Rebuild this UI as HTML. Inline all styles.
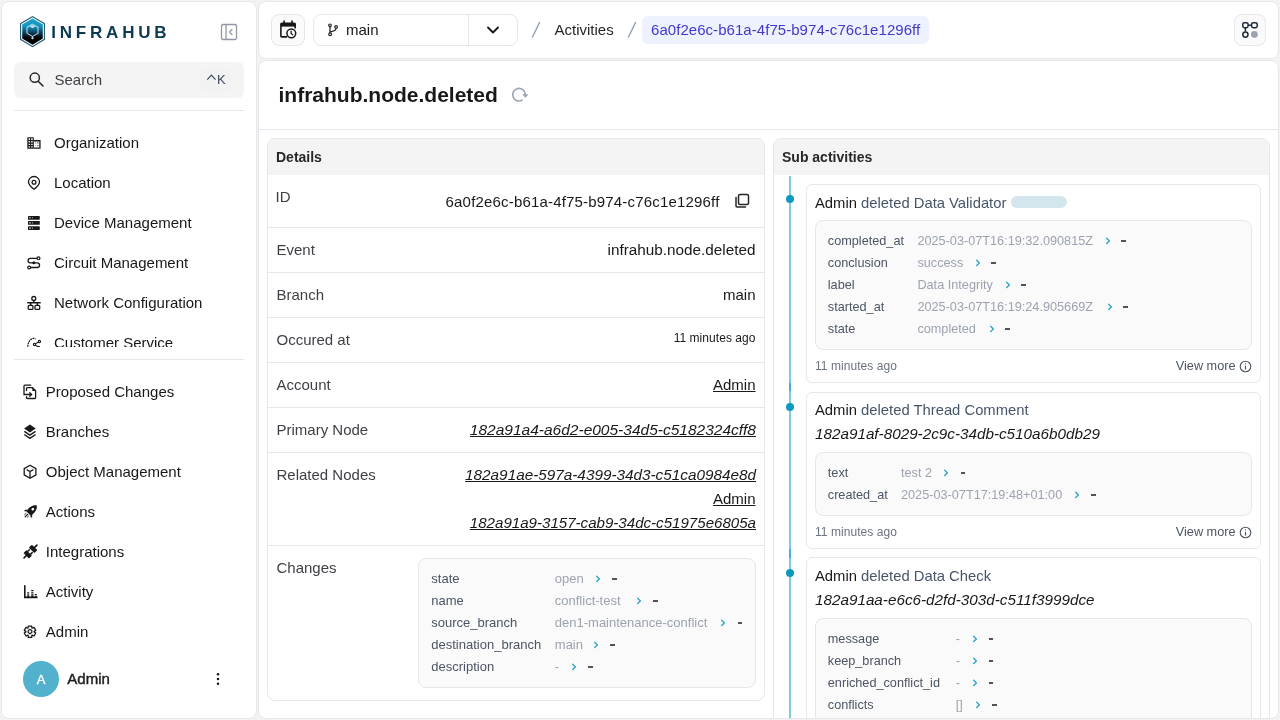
<!DOCTYPE html>
<html><head><meta charset="utf-8"><title>infrahub.node.deleted</title>
<style>
html,body{margin:0;padding:0}
body{width:1280px;height:720px;position:relative;overflow:hidden;background:#f3f3f4;font-family:"Liberation Sans",sans-serif}
.t{position:absolute;white-space:nowrap;line-height:1}
svg{overflow:visible}
</style></head><body><div id="root" style="position:absolute;left:0;top:0;width:1280px;height:720px;will-change:transform">
<div style='position:absolute;left:1px;top:1px;width:256px;height:718px;box-sizing:border-box;background:#fff;border:1px solid #e5e7eb;border-radius:8px'></div>
<div style='position:absolute;left:258px;top:1px;width:1021px;height:58px;box-sizing:border-box;background:#fff;border:1px solid #e5e7eb;border-radius:8px'></div>
<div style='position:absolute;left:258px;top:60px;width:1021px;height:659px;box-sizing:border-box;background:#fff;border:1px solid #e5e7eb;border-radius:8px'></div>
<svg style='position:absolute;left:19px;top:15px;' width='27' height='33' viewBox='0 0 27 33' fill='none'>
<defs><linearGradient id='lg' x1='0' y1='0' x2='0' y2='1'>
<stop offset='0' stop-color='#1aa2cb'/><stop offset='0.3' stop-color='#1595c0'/><stop offset='0.5' stop-color='#0d4d6b'/><stop offset='0.66' stop-color='#07192a'/><stop offset='0.74' stop-color='#000'/><stop offset='1' stop-color='#000'/></linearGradient></defs>
<polygon points='13.5,1 26,8.3 26,24.7 13.5,32.2 1,24.7 1,8.3' fill='#245d78'/>
<polygon points='13.5,2.2 24.9,8.9 24.9,24.1 13.5,31 2.1,24.1 2.1,8.9' fill='#f4fafc'/>
<polygon points='13.5,3.4 23.8,9.5 23.8,23.5 13.5,29.8 3.2,23.5 3.2,9.5' fill='url(#lg)'/>
<path d='M13.5 9.2 L19 12.2 V18.4 L13.5 21.4 L8 18.4 V12.2 Z' stroke='#dfeff5' stroke-width='1' fill='none' opacity='.9'/>
<path d='M10.5 11.6 L13.5 13.2 L16.5 11.6 L13.5 10 Z' fill='#e8f4f8' opacity='.8'/>
<path d='M13.5 21.4 V23.8 M11.9 22.6 L13.5 23.8 L15.1 22.6' stroke='#e6f3f8' stroke-width='0.9'/>
</svg>
<div class='t ' style='left:51.2px;top:24px;font-size:17px;font-weight:700;color:#0b3a52;font-style:normal;letter-spacing:3.8px'>INFRAHUB</div>
<svg style='position:absolute;left:220px;top:23px;' width='18' height='18' viewBox='0 0 18 18' fill='none'><rect x='1.5' y='1.5' width='15' height='15' rx='1.5' stroke='#8f97a6' stroke-width='1.3'/><line x1='6' y1='1.5' x2='6' y2='16.5' stroke='#8f97a6' stroke-width='1.3'/><path d='M12 6.5 L9.5 9 L12 11.5' stroke='#8f97a6' stroke-width='1.3' stroke-linecap='round' stroke-linejoin='round'/></svg>
<div style='position:absolute;left:14px;top:62px;width:230px;height:36px;box-sizing:border-box;background:#f4f4f5;border-radius:6px'></div>
<svg style='position:absolute;left:28px;top:71px;' width='17' height='17' viewBox='0 0 17 17' fill='none'><circle cx='6.8' cy='6.7' r='4.6' stroke='#27272a' stroke-width='1.5'/><line x1='10.2' y1='10.2' x2='15' y2='15' stroke='#27272a' stroke-width='1.6' stroke-linecap='round'/></svg>
<div class='t ' style='left:54.5px;top:72px;font-size:15px;font-weight:400;color:#3f3f46;font-style:normal;'>Search</div>
<div style='position:absolute;left:200px;top:70px;width:31px;height:20px;box-sizing:border-box;background:#f1f2f4;border-radius:4px'></div>
<svg style='position:absolute;left:206px;top:74px;' width='11' height='7' viewBox='0 0 11 7' fill='none'><path d='M1.3 5.6 L5.4 1.2 L9.5 5.6' stroke='#3f4a5a' stroke-width='1.2'/></svg>
<div class='t ' style='left:217px;top:73px;font-size:13px;font-weight:400;color:#3f4a5a;font-style:normal;'>K</div>
<div style='position:absolute;left:14px;top:110px;width:230px;height:1px;box-sizing:border-box;background:#e5e7eb'></div>
<div style='position:absolute;left:2px;top:118px;width:254px;height:229px;overflow:hidden;'><div style='position:absolute;left:-2px;top:-118px;width:1280px;height:720px'>
<svg style='position:absolute;left:27px;top:136px;' width='14' height='14' viewBox='0 0 14 14' fill='none'><rect x='0.3' y='1.3' width='6.5' height='11.5' rx='0.5' fill='#18181b'/><path d='M1.6 2.3h1.5v1.6h-1.5zM4.1 2.3h1.6v1.6h-1.6zM1.6 5h1.5v1.4h-1.5zM4.1 5h1.6v1.4h-1.6zM1.6 7.7h1.5v1.4h-1.5zM4.1 7.7h1.6v1.4h-1.6zM1.6 10.2h1.5v1.4h-1.5zM4.1 10.2h1.6v1.4h-1.6z' fill='#fff' opacity='.9'/><path d='M6.8 4.75 H12.95 V12.15 H6.8' stroke='#18181b' stroke-width='1.3' fill='none'/><circle cx='10.9' cy='6.9' r='.65' fill='#18181b'/><circle cx='10.9' cy='9.6' r='.65' fill='#18181b'/><circle cx='8.4' cy='6.9' r='.6' fill='#18181b' opacity='.6'/><circle cx='8.4' cy='9.6' r='.6' fill='#18181b' opacity='.4'/></svg>
<div class='t ' style='left:54px;top:135px;font-size:15px;font-weight:400;color:#18181b;font-style:normal;'>Organization</div>
<svg style='position:absolute;left:27px;top:176px;' width='14' height='14' viewBox='0 0 14 14' fill='none'><path d='M7 13.3 C3.6 10.6 1.5 8.3 1.5 6 A5.5 5.5 0 0 1 12.5 6 C12.5 8.3 10.4 10.6 7 13.3 Z' stroke='#18181b' stroke-width='1.3'/><circle cx='7' cy='6.3' r='1.9' stroke='#18181b' stroke-width='1.3'/></svg>
<div class='t ' style='left:54px;top:175px;font-size:15px;font-weight:400;color:#18181b;font-style:normal;'>Location</div>
<svg style='position:absolute;left:27px;top:216px;' width='14' height='14' viewBox='0 0 14 14' fill='none'><rect x='1' y='0' width='11.8' height='3.7' rx='0.7' fill='#18181b'/><rect x='1' y='5' width='11.8' height='3.8' rx='0.3' fill='#18181b'/><rect x='1' y='10.2' width='11.8' height='3.9' rx='0.7' fill='#18181b'/><path d='M2.2 1.8h1.6M5 1.8h.7M2.2 6.9h1.6M5 6.9h.7M2.2 12.1h1.6M5 12.1h.7' stroke='#fff' stroke-width='1.1' opacity='.85'/></svg>
<div class='t ' style='left:54px;top:215px;font-size:15px;font-weight:400;color:#18181b;font-style:normal;'>Device Management</div>
<svg style='position:absolute;left:27px;top:256px;' width='14' height='14' viewBox='0 0 14 14' fill='none'><path d='M10 2.3 H3.3 A2.25 2.25 0 0 0 3.3 6.8 H10.2 A2.35 2.35 0 0 1 10.2 11.5 H3.7' stroke='#18181b' stroke-width='1.3'/><circle cx='11.5' cy='2.3' r='1.45' stroke='#18181b' stroke-width='1.2' fill='#fff'/><circle cx='2.2' cy='11.5' r='1.45' stroke='#18181b' stroke-width='1.2' fill='#fff'/><circle cx='6.8' cy='6.8' r='1.5' fill='#18181b'/></svg>
<div class='t ' style='left:54px;top:255px;font-size:15px;font-weight:400;color:#18181b;font-style:normal;'>Circuit Management</div>
<svg style='position:absolute;left:27px;top:296px;' width='14' height='14' viewBox='0 0 14 14' fill='none'><circle cx='6.8' cy='2.5' r='2' stroke='#18181b' stroke-width='1.3'/><path d='M6.8 4.5 V6.8 M0.3 6.8 H13.7 M3.7 6.8 V9.3 M10.4 6.8 V9.3' stroke='#18181b' stroke-width='1.4'/><rect x='1.25' y='9.3' width='4.7' height='4.1' rx='1' stroke='#18181b' stroke-width='1.3'/><rect x='8' y='9.3' width='4.7' height='4.1' rx='1' stroke='#18181b' stroke-width='1.3'/></svg>
<div class='t ' style='left:54px;top:295px;font-size:15px;font-weight:400;color:#18181b;font-style:normal;'>Network Configuration</div>
<svg style='position:absolute;left:27px;top:336px;' width='14' height='14' viewBox='0 0 14 14' fill='none'><path d='M0.8 10.8 C0.8 7 2.6 3 6.3 2.4 C7.3 2.3 8 2.5 8.6 3.2' stroke='#18181b' stroke-width='1.2' stroke-dasharray='1.8 0.7'/><circle cx='7.5' cy='8.5' r='1.15' stroke='#18181b' stroke-width='1.1'/><circle cx='12.4' cy='5.5' r='1.15' stroke='#18181b' stroke-width='1.1'/><path d='M8.5 7.8 L11.4 6.1 M8.5 9.2 L10.6 10.5 H12.9' stroke='#18181b' stroke-width='1.1'/></svg>
<div class='t ' style='left:54px;top:335px;font-size:15px;font-weight:400;color:#18181b;font-style:normal;'>Customer Service</div>
</div></div>
<div style='position:absolute;left:14px;top:359px;width:230px;height:1px;box-sizing:border-box;background:#e5e7eb'></div>
<svg style='position:absolute;left:23px;top:384px;' width='15' height='15' viewBox='0 0 15 15' fill='none'><path d='M7.7 1.2 H1.9 C1.4 1.2 1 1.6 1 2.1 V10.5 H8.6' stroke='#18181b' stroke-width='1.3' stroke-linecap='round'/><path d='M6.7 8.7 L8.6 10.5 L6.7 12.3' stroke='#18181b' stroke-width='1.3' stroke-linecap='round' stroke-linejoin='round'/><path d='M3.5 6.6 V4.6 C3.5 4.1 3.9 3.7 4.4 3.7 H9.5 L12.6 6.8 V13.6 C12.6 14.1 12.2 14.5 11.7 14.5 H4.4 C3.9 14.5 3.5 14.1 3.5 13.6 V12.6' stroke='#18181b' stroke-width='1.3' stroke-linecap='round'/><path d='M9.3 3.7 V7 H12.6 Z' fill='#18181b'/></svg>
<div class='t ' style='left:45.8px;top:384px;font-size:15px;font-weight:400;color:#18181b;font-style:normal;'>Proposed Changes</div>
<svg style='position:absolute;left:23px;top:424px;' width='15' height='15' viewBox='0 0 15 15' fill='none'><path d='M6.9 0.4 L12.7 4.4 L6.9 8.4 L1.1 4.4 Z' fill='#18181b'/><path d='M1.3 7.4 L6.9 11.2 L12.5 7.4 M1.3 10.5 L6.9 14.3 L12.5 10.5' stroke='#18181b' stroke-width='1.4' stroke-linejoin='round' fill='none'/></svg>
<div class='t ' style='left:45.8px;top:424px;font-size:15px;font-weight:400;color:#18181b;font-style:normal;'>Branches</div>
<svg style='position:absolute;left:23px;top:464px;' width='15' height='15' viewBox='0 0 15 15' fill='none'><path d='M7 1.3 L12.9 4.6 V10.9 L7 14.3 L1.2 10.9 V4.6 Z' stroke='#18181b' stroke-width='1.3' stroke-linejoin='round'/><path d='M3.6 5.5 C5 6.6 5.8 7.3 7 7.4 C8.2 7.3 9 6.6 10.4 5.5 M7 7.5 V14' stroke='#18181b' stroke-width='1.3'/></svg>
<div class='t ' style='left:45.8px;top:464px;font-size:15px;font-weight:400;color:#18181b;font-style:normal;'>Object Management</div>
<svg style='position:absolute;left:23px;top:504px;' width='15' height='15' viewBox='0 0 15 15' fill='none'><g transform='rotate(45 7.5 7.5)'><path d='M7.5 -1.3 C10.4 0.8 11.2 3.8 11 6.8 L10.6 10.3 H4.4 L4 6.8 C3.8 3.8 4.6 0.8 7.5 -1.3 Z' fill='#18181b'/><ellipse cx='7.5' cy='4.2' rx='1.2' ry='1.4' fill='#fff'/><path d='M4.3 8.2 L2.6 10 V11.8 L4.5 10.6 Z M10.7 8.2 L12.4 10 V11.8 L10.5 10.6 Z' fill='#18181b'/><path d='M7.5 11.6 V15' stroke='#18181b' stroke-width='1.2' stroke-linecap='round'/><path d='M5.6 11.8 V14 M9.4 11.8 V14' stroke='#18181b' stroke-width='1.1' opacity='.5' stroke-linecap='round'/></g></svg>
<div class='t ' style='left:45.8px;top:504px;font-size:15px;font-weight:400;color:#18181b;font-style:normal;'>Actions</div>
<svg style='position:absolute;left:23px;top:544px;' width='15' height='15' viewBox='0 0 15 15' fill='none'><g transform='rotate(-45 7.5 7.5)'><path d='M-1.6 7.5 H1.8 M13 7.5 H16.6' stroke='#18181b' stroke-width='1.6' stroke-linecap='round'/><rect x='1.4' y='3.6' width='4.2' height='7.8' rx='0.8' fill='#18181b'/><path d='M5.4 5.5 H7.9 M5.4 9.5 H7.9' stroke='#18181b' stroke-width='1.5' stroke-linecap='round'/><rect x='9.1' y='3.6' width='4.2' height='7.8' rx='0.8' fill='#18181b'/></g></svg>
<div class='t ' style='left:45.8px;top:544px;font-size:15px;font-weight:400;color:#18181b;font-style:normal;'>Integrations</div>
<svg style='position:absolute;left:23px;top:584px;' width='15' height='15' viewBox='0 0 15 15' fill='none'><path d='M1.8 2 V13.4 H13.7' stroke='#18181b' stroke-width='1.6' stroke-linecap='square'/><path d='M4.2 8.9 h2 M4.2 11 h2 M4.2 12.7 h2 M8.2 6.7 h2.3 M8.2 8.9 h2.3 M8.2 11 h2.3 M8.2 12.7 h2.3 M11.7 10.6 h2.1 M11.7 12.7 h2.1' stroke='#18181b' stroke-width='1.3'/></svg>
<div class='t ' style='left:45.8px;top:584px;font-size:15px;font-weight:400;color:#18181b;font-style:normal;'>Activity</div>
<svg style='position:absolute;left:23px;top:624px;' width='15' height='15' viewBox='0 0 15 15' fill='none'><path d='M5.11 4.06 L5.26 2.06 L8.74 2.06 L8.89 4.06 L9.20 4.24 L11.01 3.37 L12.75 6.39 L11.10 7.52 L11.10 7.88 L12.75 9.01 L11.01 12.03 L9.20 11.16 L8.89 11.34 L8.74 13.34 L5.26 13.34 L5.11 11.34 L4.80 11.16 L2.99 12.03 L1.25 9.01 L2.90 7.88 L2.90 7.52 L1.25 6.39 L2.99 3.37 L4.80 4.24 Z' stroke='#18181b' stroke-width='1.25' stroke-linejoin='round' fill='none'/><path d='M7 5.5 L8.8 6.5 V8.6 L7 9.7 L5.2 8.6 V6.5 Z' stroke='#18181b' stroke-width='1.2' stroke-linejoin='round'/></svg>
<div class='t ' style='left:45.8px;top:624px;font-size:15px;font-weight:400;color:#18181b;font-style:normal;'>Admin</div>
<div style='position:absolute;left:23px;top:661px;width:36px;height:36px;box-sizing:border-box;background:#52b1cc;border-radius:50%'></div>
<div class='t ' style='left:34px;top:673px;font-size:13px;font-weight:400;color:#fff;font-style:normal;width:14px;text-align:center;-webkit-text-stroke:0.3px #fff'>A</div>
<div class='t ' style='left:67.3px;top:671px;font-size:15px;font-weight:400;color:#1f1f23;font-style:normal;-webkit-text-stroke:0.45px #1f1f23'>Admin</div>
<svg style='position:absolute;left:215px;top:672px;' width='6' height='14' viewBox='0 0 6 14' fill='none'><circle cx='3' cy='2.3' r='1.25' fill='#18181b'/><circle cx='3' cy='7' r='1.25' fill='#18181b'/><circle cx='3' cy='11.7' r='1.25' fill='#18181b'/></svg>
<div style='position:absolute;left:271px;top:14px;width:34px;height:32px;box-sizing:border-box;background:#fafafa;border:1px solid #e5e7eb;border-radius:8px'></div>
<svg style='position:absolute;left:279px;top:20px;' width='19' height='19' viewBox='0 0 19 19' fill='none'><path d='M8 16.9 H2.9 C2.3 16.9 1.9 16.5 1.9 15.9 V4.2 C1.9 3.6 2.3 3.2 2.9 3.2 H15.2 C15.8 3.2 16.2 3.6 16.2 4.2 V8.6' stroke='#18181b' stroke-width='1.6'/><rect x='1.9' y='3.1' width='14.3' height='3.5' fill='#18181b'/><path d='M5.1 1 V4 M13 1 V4' stroke='#18181b' stroke-width='1.6' stroke-linecap='round'/><circle cx='12.3' cy='13.3' r='4.4' fill='#fff' stroke='#18181b' stroke-width='1.5'/><path d='M12.1 11.2 V13.5 L13.7 14.7' stroke='#18181b' stroke-width='1.3' stroke-linecap='round'/></svg>
<div style='position:absolute;left:313px;top:14px;width:205px;height:32px;box-sizing:border-box;background:#fff;border:1px solid #e5e7eb;border-radius:8px'></div>
<div style='position:absolute;left:468px;top:15px;width:1px;height:30px;box-sizing:border-box;background:#e5e7eb'></div>
<svg style='position:absolute;left:326px;top:23px;' width='13' height='14' viewBox='0 0 13 14' fill='none'><circle cx='4' cy='2.3' r='1.3' stroke='#27272a' stroke-width='1.2'/><circle cx='4.1' cy='11.3' r='1.4' stroke='#27272a' stroke-width='1.2'/><circle cx='10.1' cy='3.9' r='1.3' stroke='#27272a' stroke-width='1.2'/><path d='M4 3.6 V9.9 M10.1 5.2 C10.1 7.2 9 8 4.3 8.8' stroke='#27272a' stroke-width='1.3'/></svg>
<div class='t ' style='left:346px;top:22px;font-size:15px;font-weight:400;color:#18181b;font-style:normal;'>main</div>
<svg style='position:absolute;left:486px;top:25px;' width='14' height='10' viewBox='0 0 14 10' fill='none'><path d='M2 2.5 L7 7.5 L12 2.5' stroke='#18181b' stroke-width='1.9' stroke-linecap='round' stroke-linejoin='round'/></svg>
<svg style='position:absolute;left:530px;top:20px;' width='12' height='20' viewBox='0 0 12 20' fill='none'><line x1='9.5' y1='2.5' x2='2.5' y2='17' stroke='#94a3b8' stroke-width='1.5' stroke-linecap='round'/></svg>
<div class='t ' style='left:554.5px;top:22px;font-size:15px;font-weight:400;color:#27272a;font-style:normal;'>Activities</div>
<svg style='position:absolute;left:626px;top:20px;' width='12' height='20' viewBox='0 0 12 20' fill='none'><line x1='9.5' y1='2.5' x2='2.5' y2='17' stroke='#94a3b8' stroke-width='1.5' stroke-linecap='round'/></svg>
<div style='position:absolute;left:642px;top:16px;width:287px;height:28px;box-sizing:border-box;background:#eef2ff;border-radius:6px'></div>
<div class='t ' style='left:651px;top:22px;font-size:15px;font-weight:400;color:#4338ca;font-style:normal;letter-spacing:0.05px'>6a0f2e6c-b61a-4f75-b974-c76c1e1296ff</div>
<div style='position:absolute;left:1234px;top:14px;width:32px;height:32px;box-sizing:border-box;background:#fafafa;border:1px solid #e5e7eb;border-radius:8px'></div>
<svg style='position:absolute;left:1241px;top:21px;' width='18' height='18' viewBox='0 0 18 18' fill='none'><rect x='1.75' y='1.75' width='5.3' height='4.9' rx='1.6' stroke='#1e293b' stroke-width='1.5'/><rect x='10.6' y='1.75' width='5.6' height='4.9' rx='1.6' stroke='#1e293b' stroke-width='1.5'/><path d='M7 4.2 H10.6 M4.4 6.6 V10.6' stroke='#1e293b' stroke-width='1.5'/><circle cx='4.4' cy='13.6' r='2.6' stroke='#1e293b' stroke-width='1.5'/><circle cx='13.4' cy='13.4' r='3.4' fill='#9ca3af'/></svg>
<div class='t ' style='left:278.5px;top:84px;font-size:21px;font-weight:700;color:#18181b;font-style:normal;'>infrahub.node.deleted</div>
<svg style='position:absolute;left:509px;top:86px;' width='20' height='18' viewBox='0 0 20 18' fill='none'><path d='M13.15 14.16 A6.3 6.3 0 1 1 16.3 8.4' stroke='#9aa3b2' stroke-width='1.6' stroke-linecap='round'/><path d='M13.8 8.6 L18.9 8.6 L16.35 11.5 Z' fill='#9aa3b2' stroke='#9aa3b2' stroke-width='0.6' stroke-linejoin='round'/></svg>
<div style='position:absolute;left:259px;top:129px;width:1019px;height:1px;box-sizing:border-box;background:#e5e7eb'></div>
<div style='position:absolute;left:267px;top:138px;width:498px;height:600px;box-sizing:border-box;background:#fff;border:1px solid #e5e7eb;border-radius:8px;height:563px'></div>
<div style='position:absolute;left:268px;top:139px;width:496px;height:36px;box-sizing:border-box;background:#f4f4f5;border-radius:7px 7px 0 0'></div>
<div class='t ' style='left:276px;top:150px;font-size:14px;font-weight:700;color:#27272a;font-style:normal;'>Details</div>
<div style='position:absolute;left:268px;top:227px;width:496px;height:1px;box-sizing:border-box;background:#e5e7eb'></div>
<div style='position:absolute;left:268px;top:272px;width:496px;height:1px;box-sizing:border-box;background:#e5e7eb'></div>
<div style='position:absolute;left:268px;top:317px;width:496px;height:1px;box-sizing:border-box;background:#e5e7eb'></div>
<div style='position:absolute;left:268px;top:362px;width:496px;height:1px;box-sizing:border-box;background:#e5e7eb'></div>
<div style='position:absolute;left:268px;top:407px;width:496px;height:1px;box-sizing:border-box;background:#e5e7eb'></div>
<div style='position:absolute;left:268px;top:452px;width:496px;height:1px;box-sizing:border-box;background:#e5e7eb'></div>
<div style='position:absolute;left:268px;top:545px;width:496px;height:1px;box-sizing:border-box;background:#e5e7eb'></div>
<div class='t ' style='left:275.5px;top:189px;font-size:15px;font-weight:400;color:#3f3f46;font-style:normal;'>ID</div>
<div class='t ' style='right:560.5px;top:193.5px;font-size:15px;font-weight:400;color:#18181b;font-style:normal;letter-spacing:0.18px'>6a0f2e6c-b61a-4f75-b974-c76c1e1296ff</div>
<svg style='position:absolute;left:734px;top:193px;' width='16' height='16' viewBox='0 0 16 16' fill='none'><rect x='4.5' y='1.5' width='10' height='10' rx='1.5' stroke='#27272a' stroke-width='1.5'/><path d='M2 4.5 V13 C2 13.6 2.4 14 3 14 H11.5' stroke='#27272a' stroke-width='1.5' stroke-linecap='round'/></svg>
<div class='t ' style='left:276.5px;top:242px;font-size:15px;font-weight:400;color:#3f3f46;font-style:normal;'>Event</div>
<div class='t ' style='right:524.5px;top:242px;font-size:15.3px;font-weight:400;color:#18181b;font-style:normal;'>infrahub.node.deleted</div>
<div class='t ' style='left:276.5px;top:287px;font-size:15px;font-weight:400;color:#3f3f46;font-style:normal;'>Branch</div>
<div class='t ' style='right:524.5px;top:287px;font-size:15px;font-weight:400;color:#18181b;font-style:normal;'>main</div>
<div class='t ' style='left:276.5px;top:332px;font-size:15px;font-weight:400;color:#3f3f46;font-style:normal;'>Occured at</div>
<div class='t ' style='right:524.5px;top:332px;font-size:12px;font-weight:400;color:#18181b;font-style:normal;letter-spacing:0.05px'>11 minutes ago</div>
<div class='t ' style='left:276.5px;top:377px;font-size:15px;font-weight:400;color:#3f3f46;font-style:normal;'>Account</div>
<div class='t ' style='right:524.5px;top:377px;font-size:15px;font-weight:400;color:#18181b;font-style:normal;text-decoration:underline'>Admin</div>
<div class='t ' style='left:276.5px;top:422px;font-size:15px;font-weight:400;color:#3f3f46;font-style:normal;'>Primary Node</div>
<div class='t ' style='right:524px;top:422px;font-size:15.5px;font-weight:400;color:#18181b;font-style:italic;text-decoration:underline'>182a91a4-a6d2-e005-34d5-c5182324cff8</div>
<div class='t ' style='left:276.5px;top:467px;font-size:15px;font-weight:400;color:#3f3f46;font-style:normal;'>Related Nodes</div>
<div class='t ' style='right:524px;top:467px;font-size:15.3px;font-weight:400;color:#18181b;font-style:italic;text-decoration:underline'>182a91ae-597a-4399-34d3-c51ca0984e8d</div>
<div class='t ' style='right:524.5px;top:491px;font-size:15px;font-weight:400;color:#18181b;font-style:normal;text-decoration:underline'>Admin</div>
<div class='t ' style='right:524px;top:515px;font-size:15.1px;font-weight:400;color:#18181b;font-style:italic;text-decoration:underline'>182a91a9-3157-cab9-34dc-c51975e6805a</div>
<div class='t ' style='left:276.5px;top:560px;font-size:15px;font-weight:400;color:#3f3f46;font-style:normal;'>Changes</div>
<div style='position:absolute;left:418px;top:558px;width:338px;height:130px;box-sizing:border-box;background:#fafafa;border:1px solid #e5e7eb;border-radius:8px'></div>
<div class='t ' style='left:431.3px;top:572px;font-size:13px;font-weight:400;color:#4b5563;font-style:normal;'>state</div>
<div class='t ' style='left:554.8px;top:572px;font-size:13px;font-weight:400;color:#9ca3af;font-style:normal;'>open</div>
<svg style='position:absolute;left:595px;top:573px;' width='8' height='10' viewBox='0 0 8 10' fill='none'><path d='M1.7 3.3 L4.4 5.9 L1.7 8.5' stroke='#2ea5c6' stroke-width='1.35' stroke-linecap='round' stroke-linejoin='round'/></svg>
<div style='position:absolute;left:612.1px;top:578.4px;width:4.6px;height:1.4px;box-sizing:border-box;background:#52525b'></div>
<div class='t ' style='left:431.3px;top:594px;font-size:13px;font-weight:400;color:#4b5563;font-style:normal;'>name</div>
<div class='t ' style='left:554.8px;top:594px;font-size:13px;font-weight:400;color:#9ca3af;font-style:normal;'>conflict-test</div>
<svg style='position:absolute;left:635.5px;top:595px;' width='8' height='10' viewBox='0 0 8 10' fill='none'><path d='M1.7 3.3 L4.4 5.9 L1.7 8.5' stroke='#2ea5c6' stroke-width='1.35' stroke-linecap='round' stroke-linejoin='round'/></svg>
<div style='position:absolute;left:653.1px;top:600.4px;width:4.6px;height:1.4px;box-sizing:border-box;background:#52525b'></div>
<div class='t ' style='left:431.3px;top:616px;font-size:13px;font-weight:400;color:#4b5563;font-style:normal;'>source_branch</div>
<div class='t ' style='left:554.8px;top:616px;font-size:13px;font-weight:400;color:#9ca3af;font-style:normal;'>den1-maintenance-conflict</div>
<svg style='position:absolute;left:720px;top:617px;' width='8' height='10' viewBox='0 0 8 10' fill='none'><path d='M1.7 3.3 L4.4 5.9 L1.7 8.5' stroke='#2ea5c6' stroke-width='1.35' stroke-linecap='round' stroke-linejoin='round'/></svg>
<div style='position:absolute;left:737.5px;top:622.4px;width:4.6px;height:1.4px;box-sizing:border-box;background:#52525b'></div>
<div class='t ' style='left:431.3px;top:638px;font-size:13px;font-weight:400;color:#4b5563;font-style:normal;'>destination_branch</div>
<div class='t ' style='left:554.8px;top:638px;font-size:13px;font-weight:400;color:#9ca3af;font-style:normal;'>main</div>
<svg style='position:absolute;left:592.5px;top:639px;' width='8' height='10' viewBox='0 0 8 10' fill='none'><path d='M1.7 3.3 L4.4 5.9 L1.7 8.5' stroke='#2ea5c6' stroke-width='1.35' stroke-linecap='round' stroke-linejoin='round'/></svg>
<div style='position:absolute;left:610.1px;top:644.4px;width:4.6px;height:1.4px;box-sizing:border-box;background:#52525b'></div>
<div class='t ' style='left:431.3px;top:660px;font-size:13px;font-weight:400;color:#4b5563;font-style:normal;'>description</div>
<div class='t ' style='left:554.8px;top:660px;font-size:13px;font-weight:400;color:#9ca3af;font-style:normal;'>-</div>
<svg style='position:absolute;left:571px;top:661px;' width='8' height='10' viewBox='0 0 8 10' fill='none'><path d='M1.7 3.3 L4.4 5.9 L1.7 8.5' stroke='#2ea5c6' stroke-width='1.35' stroke-linecap='round' stroke-linejoin='round'/></svg>
<div style='position:absolute;left:588.2px;top:666.4px;width:4.6px;height:1.4px;box-sizing:border-box;background:#52525b'></div>
<div style='position:absolute;left:259px;top:61px;width:1019px;height:657px;overflow:hidden;border-radius:0 0 7px 7px'><div style='position:absolute;left:-259px;top:-61px;width:1280px;height:720px'>
<div style='position:absolute;left:773px;top:138px;width:497px;height:700px;box-sizing:border-box;background:#fff;border:1px solid #e5e7eb;border-radius:8px'></div>
<div style='position:absolute;left:774px;top:139px;width:495px;height:36px;box-sizing:border-box;background:#f4f4f5;border-radius:7px 7px 0 0'></div>
<div class='t ' style='left:782px;top:150px;font-size:14px;font-weight:700;color:#27272a;font-style:normal;'>Sub activities</div>
<div style='position:absolute;left:789px;top:176px;width:2px;height:215px;box-sizing:border-box;background:rgba(14,155,192,.52)'></div>
<div style='position:absolute;left:789px;top:383px;width:2px;height:175px;box-sizing:border-box;background:rgba(14,155,192,.52)'></div>
<div style='position:absolute;left:789px;top:549px;width:2px;height:200px;box-sizing:border-box;background:rgba(14,155,192,.52)'></div>
<div style='position:absolute;left:785.8px;top:194.8px;width:8.4px;height:8.4px;box-sizing:border-box;background:#0e99c0;border-radius:50%'></div>
<div style='position:absolute;left:785.8px;top:402.8px;width:8.4px;height:8.4px;box-sizing:border-box;background:#0e99c0;border-radius:50%'></div>
<div style='position:absolute;left:785.8px;top:568.8px;width:8.4px;height:8.4px;box-sizing:border-box;background:#0e99c0;border-radius:50%'></div>
<div style='position:absolute;left:806px;top:184px;width:455px;height:199px;box-sizing:border-box;background:#fff;border:1px solid #e5e7eb;border-radius:6px'></div>
<div class='t ' style='left:815px;top:196px;font-size:14.8px;font-weight:400;color:#18181b;font-style:normal;'>Admin <span style="color:#475569">deleted Data Validator</span></div>
<div style='position:absolute;left:1011px;top:196px;width:56px;height:12px;box-sizing:border-box;background:#d4e6ed;border-radius:6px'></div>
<div style='position:absolute;left:815px;top:220px;width:437px;height:130px;box-sizing:border-box;background:#fafafa;border:1px solid #e5e7eb;border-radius:8px'></div>
<div class='t ' style='left:827.8px;top:235px;font-size:12.7px;font-weight:400;color:#4b5563;font-style:normal;'>completed_at</div>
<div class='t ' style='left:917.4px;top:235px;font-size:12.7px;font-weight:400;color:#9ca3af;font-style:normal;'>2025-03-07T16:19:32.090815Z</div>
<svg style='position:absolute;left:1105px;top:235px;' width='8' height='10' viewBox='0 0 8 10' fill='none'><path d='M1.7 3.3 L4.4 5.9 L1.7 8.5' stroke='#2ea5c6' stroke-width='1.35' stroke-linecap='round' stroke-linejoin='round'/></svg>
<div style='position:absolute;left:1121.0px;top:240.4px;width:4.6px;height:1.4px;box-sizing:border-box;background:#52525b'></div>
<div class='t ' style='left:827.8px;top:257px;font-size:12.7px;font-weight:400;color:#4b5563;font-style:normal;'>conclusion</div>
<div class='t ' style='left:917.4px;top:257px;font-size:12.7px;font-weight:400;color:#9ca3af;font-style:normal;'>success</div>
<svg style='position:absolute;left:975px;top:257px;' width='8' height='10' viewBox='0 0 8 10' fill='none'><path d='M1.7 3.3 L4.4 5.9 L1.7 8.5' stroke='#2ea5c6' stroke-width='1.35' stroke-linecap='round' stroke-linejoin='round'/></svg>
<div style='position:absolute;left:991.0px;top:262.4px;width:4.6px;height:1.4px;box-sizing:border-box;background:#52525b'></div>
<div class='t ' style='left:827.8px;top:279px;font-size:12.7px;font-weight:400;color:#4b5563;font-style:normal;'>label</div>
<div class='t ' style='left:917.4px;top:279px;font-size:12.7px;font-weight:400;color:#9ca3af;font-style:normal;'>Data Integrity</div>
<svg style='position:absolute;left:1005px;top:279px;' width='8' height='10' viewBox='0 0 8 10' fill='none'><path d='M1.7 3.3 L4.4 5.9 L1.7 8.5' stroke='#2ea5c6' stroke-width='1.35' stroke-linecap='round' stroke-linejoin='round'/></svg>
<div style='position:absolute;left:1021.0px;top:284.4px;width:4.6px;height:1.4px;box-sizing:border-box;background:#52525b'></div>
<div class='t ' style='left:827.8px;top:301px;font-size:12.7px;font-weight:400;color:#4b5563;font-style:normal;'>started_at</div>
<div class='t ' style='left:917.4px;top:301px;font-size:12.7px;font-weight:400;color:#9ca3af;font-style:normal;'>2025-03-07T16:19:24.905669Z</div>
<svg style='position:absolute;left:1107px;top:301px;' width='8' height='10' viewBox='0 0 8 10' fill='none'><path d='M1.7 3.3 L4.4 5.9 L1.7 8.5' stroke='#2ea5c6' stroke-width='1.35' stroke-linecap='round' stroke-linejoin='round'/></svg>
<div style='position:absolute;left:1123.0px;top:306.4px;width:4.6px;height:1.4px;box-sizing:border-box;background:#52525b'></div>
<div class='t ' style='left:827.8px;top:323px;font-size:12.7px;font-weight:400;color:#4b5563;font-style:normal;'>state</div>
<div class='t ' style='left:917.4px;top:323px;font-size:12.7px;font-weight:400;color:#9ca3af;font-style:normal;'>completed</div>
<svg style='position:absolute;left:989px;top:323px;' width='8' height='10' viewBox='0 0 8 10' fill='none'><path d='M1.7 3.3 L4.4 5.9 L1.7 8.5' stroke='#2ea5c6' stroke-width='1.35' stroke-linecap='round' stroke-linejoin='round'/></svg>
<div style='position:absolute;left:1005.0px;top:328.4px;width:4.6px;height:1.4px;box-sizing:border-box;background:#52525b'></div>
<div class='t ' style='left:815px;top:360px;font-size:12px;font-weight:400;color:#6b7280;font-style:normal;letter-spacing:0.05px'>11 minutes ago</div>
<div class='t ' style='right:44.5px;top:360px;font-size:12.7px;font-weight:400;color:#4b5563;font-style:normal;'>View more</div>
<svg style='position:absolute;left:1239px;top:360px;' width='13' height='13' viewBox='0 0 13 13' fill='none'><circle cx='6.5' cy='6.5' r='5.3' stroke='#4b5563' stroke-width='1.1'/><path d='M6.5 5.8 V9.5' stroke='#4b5563' stroke-width='1.2'/><circle cx='6.5' cy='3.9' r='0.7' fill='#4b5563'/></svg>
<div style='position:absolute;left:806px;top:392px;width:455px;height:157px;box-sizing:border-box;background:#fff;border:1px solid #e5e7eb;border-radius:6px'></div>
<div class='t ' style='left:815px;top:403px;font-size:14.8px;font-weight:400;color:#18181b;font-style:normal;'>Admin <span style="color:#475569">deleted Thread Comment</span></div>
<div class='t ' style='left:815px;top:426px;font-size:15.25px;font-weight:400;color:#18181b;font-style:italic;'>182a91af-8029-2c9c-34db-c510a6b0db29</div>
<div style='position:absolute;left:815px;top:452px;width:437px;height:64px;box-sizing:border-box;background:#fafafa;border:1px solid #e5e7eb;border-radius:8px'></div>
<div class='t ' style='left:827.8px;top:467px;font-size:12.7px;font-weight:400;color:#4b5563;font-style:normal;'>text</div>
<div class='t ' style='left:901px;top:467px;font-size:12.7px;font-weight:400;color:#9ca3af;font-style:normal;'>test 2</div>
<svg style='position:absolute;left:943.4px;top:467px;' width='8' height='10' viewBox='0 0 8 10' fill='none'><path d='M1.7 3.3 L4.4 5.9 L1.7 8.5' stroke='#2ea5c6' stroke-width='1.35' stroke-linecap='round' stroke-linejoin='round'/></svg>
<div style='position:absolute;left:960.5px;top:472.4px;width:4.6px;height:1.4px;box-sizing:border-box;background:#52525b'></div>
<div class='t ' style='left:827.8px;top:489px;font-size:12.7px;font-weight:400;color:#4b5563;font-style:normal;'>created_at</div>
<div class='t ' style='left:901px;top:489px;font-size:12.7px;font-weight:400;color:#9ca3af;font-style:normal;'>2025-03-07T17:19:48+01:00</div>
<svg style='position:absolute;left:1073.5px;top:489px;' width='8' height='10' viewBox='0 0 8 10' fill='none'><path d='M1.7 3.3 L4.4 5.9 L1.7 8.5' stroke='#2ea5c6' stroke-width='1.35' stroke-linecap='round' stroke-linejoin='round'/></svg>
<div style='position:absolute;left:1091.0px;top:494.4px;width:4.6px;height:1.4px;box-sizing:border-box;background:#52525b'></div>
<div class='t ' style='left:815px;top:526px;font-size:12px;font-weight:400;color:#6b7280;font-style:normal;letter-spacing:0.05px'>11 minutes ago</div>
<div class='t ' style='right:44.5px;top:526px;font-size:12.7px;font-weight:400;color:#4b5563;font-style:normal;'>View more</div>
<svg style='position:absolute;left:1239px;top:526px;' width='13' height='13' viewBox='0 0 13 13' fill='none'><circle cx='6.5' cy='6.5' r='5.3' stroke='#4b5563' stroke-width='1.1'/><path d='M6.5 5.8 V9.5' stroke='#4b5563' stroke-width='1.2'/><circle cx='6.5' cy='3.9' r='0.7' fill='#4b5563'/></svg>
<div style='position:absolute;left:806px;top:557px;width:455px;height:300px;box-sizing:border-box;background:#fff;border:1px solid #e5e7eb;border-radius:6px'></div>
<div class='t ' style='left:815px;top:569px;font-size:14.8px;font-weight:400;color:#18181b;font-style:normal;'>Admin <span style="color:#475569">deleted Data Check</span></div>
<div class='t ' style='left:815px;top:592px;font-size:15.25px;font-weight:400;color:#18181b;font-style:italic;'>182a91aa-e6c6-d2fd-303d-c511f3999dce</div>
<div style='position:absolute;left:815px;top:618px;width:437px;height:200px;box-sizing:border-box;background:#fafafa;border:1px solid #e5e7eb;border-radius:8px'></div>
<div class='t ' style='left:827.8px;top:633px;font-size:12.7px;font-weight:400;color:#4b5563;font-style:normal;'>message</div>
<div class='t ' style='left:955.8px;top:633px;font-size:12.7px;font-weight:400;color:#9ca3af;font-style:normal;'>-</div>
<svg style='position:absolute;left:971.7px;top:633px;' width='8' height='10' viewBox='0 0 8 10' fill='none'><path d='M1.7 3.3 L4.4 5.9 L1.7 8.5' stroke='#2ea5c6' stroke-width='1.35' stroke-linecap='round' stroke-linejoin='round'/></svg>
<div style='position:absolute;left:988.9px;top:638.4px;width:4.6px;height:1.4px;box-sizing:border-box;background:#52525b'></div>
<div class='t ' style='left:827.8px;top:655px;font-size:12.7px;font-weight:400;color:#4b5563;font-style:normal;'>keep_branch</div>
<div class='t ' style='left:955.8px;top:655px;font-size:12.7px;font-weight:400;color:#9ca3af;font-style:normal;'>-</div>
<svg style='position:absolute;left:971.7px;top:655px;' width='8' height='10' viewBox='0 0 8 10' fill='none'><path d='M1.7 3.3 L4.4 5.9 L1.7 8.5' stroke='#2ea5c6' stroke-width='1.35' stroke-linecap='round' stroke-linejoin='round'/></svg>
<div style='position:absolute;left:988.9px;top:660.4px;width:4.6px;height:1.4px;box-sizing:border-box;background:#52525b'></div>
<div class='t ' style='left:827.8px;top:677px;font-size:12.7px;font-weight:400;color:#4b5563;font-style:normal;'>enriched_conflict_id</div>
<div class='t ' style='left:955.8px;top:677px;font-size:12.7px;font-weight:400;color:#9ca3af;font-style:normal;'>-</div>
<svg style='position:absolute;left:971.7px;top:677px;' width='8' height='10' viewBox='0 0 8 10' fill='none'><path d='M1.7 3.3 L4.4 5.9 L1.7 8.5' stroke='#2ea5c6' stroke-width='1.35' stroke-linecap='round' stroke-linejoin='round'/></svg>
<div style='position:absolute;left:988.9px;top:682.4px;width:4.6px;height:1.4px;box-sizing:border-box;background:#52525b'></div>
<div class='t ' style='left:827.8px;top:699px;font-size:12.7px;font-weight:400;color:#4b5563;font-style:normal;'>conflicts</div>
<div class='t ' style='left:955.8px;top:699px;font-size:12.7px;font-weight:400;color:#9ca3af;font-style:normal;'>[]</div>
<svg style='position:absolute;left:974.8px;top:699px;' width='8' height='10' viewBox='0 0 8 10' fill='none'><path d='M1.7 3.3 L4.4 5.9 L1.7 8.5' stroke='#2ea5c6' stroke-width='1.35' stroke-linecap='round' stroke-linejoin='round'/></svg>
<div style='position:absolute;left:992.1px;top:704.4px;width:4.6px;height:1.4px;box-sizing:border-box;background:#52525b'></div>
</div></div>
</div></body></html>
